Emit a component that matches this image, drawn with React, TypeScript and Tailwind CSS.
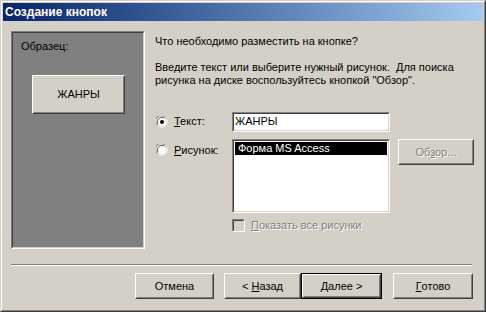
import React from "react";

const font = { fontFamily: '"Liberation Sans", Arial, sans-serif' };

const Sunken = ({ className = "", inner = "", children }: { className?: string; inner?: string; children?: React.ReactNode }) => (
	<div className={`border border-t-[#808080] border-l-[#808080] border-r-white border-b-white ${className}`}>
		<div className={`h-full w-full border border-t-[#404040] border-l-[#404040] border-r-[#d4d0c8] border-b-[#d4d0c8] ${inner}`}>{children}</div>
	</div>
);

const Raised = ({ className = "", children }: { className?: string; children?: React.ReactNode }) => (
	<div className={`border border-t-white border-l-white border-r-[#404040] border-b-[#404040] bg-[#d4d0c8] ${className}`}>
		<div className="h-full w-full border border-t-[#d4d0c8] border-l-[#d4d0c8] border-r-[#808080] border-b-[#808080] flex items-center justify-center whitespace-pre">
			{children}
		</div>
	</div>
);

const Radio = ({ checked }: { checked?: boolean }) => (
	<svg width="12" height="12" viewBox="0 0 12 12" className="shrink-0">
		<path d="M1 9 A5.5 5.5 0 0 1 9 1" fill="none" stroke="#808080" strokeWidth="1" />
		<path d="M2 8 A4.5 4.5 0 0 1 8 2" fill="none" stroke="#404040" strokeWidth="1" />
		<circle cx="6" cy="6" r="4" fill="white" />
		<path d="M3 10.5 A5.5 5.5 0 0 0 10.5 3" fill="none" stroke="white" strokeWidth="1" />
		{checked && <circle cx="6" cy="6" r="2" fill="black" />}
	</svg>
);

const App = () => {
	return (
		<div style={font} className="w-[486px] h-[312px] bg-[#d4d0c8] text-[11px] text-black leading-[13px] border border-t-[#d4d0c8] border-l-[#d4d0c8] border-r-[#404040] border-b-[#404040]">
			<div className="h-full w-full border border-t-white border-l-white border-r-[#808080] border-b-[#808080] p-px flex flex-col">
				{/* title bar */}
				<div className="h-[18px] bg-gradient-to-r from-[#0a246a] to-[#a6caf0] flex items-center pl-[2px] text-white font-bold text-[12px]">
					Создание кнопок
				</div>

				<div className="flex pl-[8px] pt-[10px]">
					{/* preview panel */}
					<Sunken className="w-[134px] h-[218px]" inner="bg-[#808080]">
						<div className="pt-[7px] pl-[8px]">Образец:</div>
						<div className="pl-[19px] pt-[22px]">
							<Raised className="w-[93px] h-[39px]">
								<span>ЖАНРЫ</span>
							</Raised>
						</div>
					</Sunken>

					{/* right side */}
					<div className="ml-[10px] flex flex-col">
						<div className="pt-[4px]">Что необходимо разместить на кнопке?</div>
						<div className="pt-[13px]">
							Введите текст или выберите нужный рисунок.&nbsp; Для поиска
							<br />
							рисунка на диске воспользуйтесь кнопкой "Обзор".
						</div>

						<div className="flex items-center mt-[25px] h-[19px]">
							<div className="w-[77px] flex items-center gap-[6px] pl-px">
								<Radio checked />
								<span><u>Т</u>екст:</span>
							</div>
							<Sunken className="w-[158px] h-[20px]" inner="bg-white flex items-center pl-[1px]">
								ЖАНРЫ
							</Sunken>
						</div>

						<div className="flex mt-[8px]">
							<div className="w-[77px] flex items-center gap-[6px] pl-px h-[20px] mt-[1px]">
								<Radio />
								<span><u>Р</u>исунок:</span>
							</div>
							<div className="flex flex-col">
								<Sunken className="w-[158px] h-[74px]" inner="bg-white p-[1px]">
									<div className="bg-black text-white h-[13px] pl-[3px] leading-[13px]">Форма MS Access</div>
								</Sunken>
								<div className="flex items-center gap-[6px] mt-[6px] text-[#808080]">
									<div className="w-[13px] h-[13px] border border-t-[#808080] border-l-[#808080] border-r-white border-b-white">
										<div className="h-full w-full border border-t-[#404040] border-l-[#404040] border-r-[#d4d0c8] border-b-[#d4d0c8] bg-[#d4d0c8]" />
									</div>
									<span className="[text-shadow:1px_1px_0_white]"><u>П</u>оказать все рисунки</span>
								</div>
							</div>
							<Raised className="w-[76px] h-[26px] ml-[8px]">
								<span className="text-[#808080] [text-shadow:1px_1px_0_white]">Об<u>з</u>ор...</span>
							</Raised>
						</div>
					</div>
				</div>

				{/* separator */}
				<div className="ml-[8px] mt-[15px] w-[461px] border-t border-t-[#808080] border-b border-b-white" />

				{/* buttons */}
				<div className="flex pl-[132px] mt-[7px]">
					<Raised className="w-[79px] h-[26px]">Отмена</Raised>
					<Raised className="w-[77px] h-[26px] ml-[10px]">{"< "}<u>Н</u>азад</Raised>
					<div className="border border-black">
						<Raised className="w-[79px] h-[24px]"><u>Д</u>алее{" >"}</Raised>
					</div>
					<Raised className="w-[80px] h-[26px] ml-[11px]"><u>Г</u>отово</Raised>
				</div>
			</div>
		</div>
	);
};

export default App;
